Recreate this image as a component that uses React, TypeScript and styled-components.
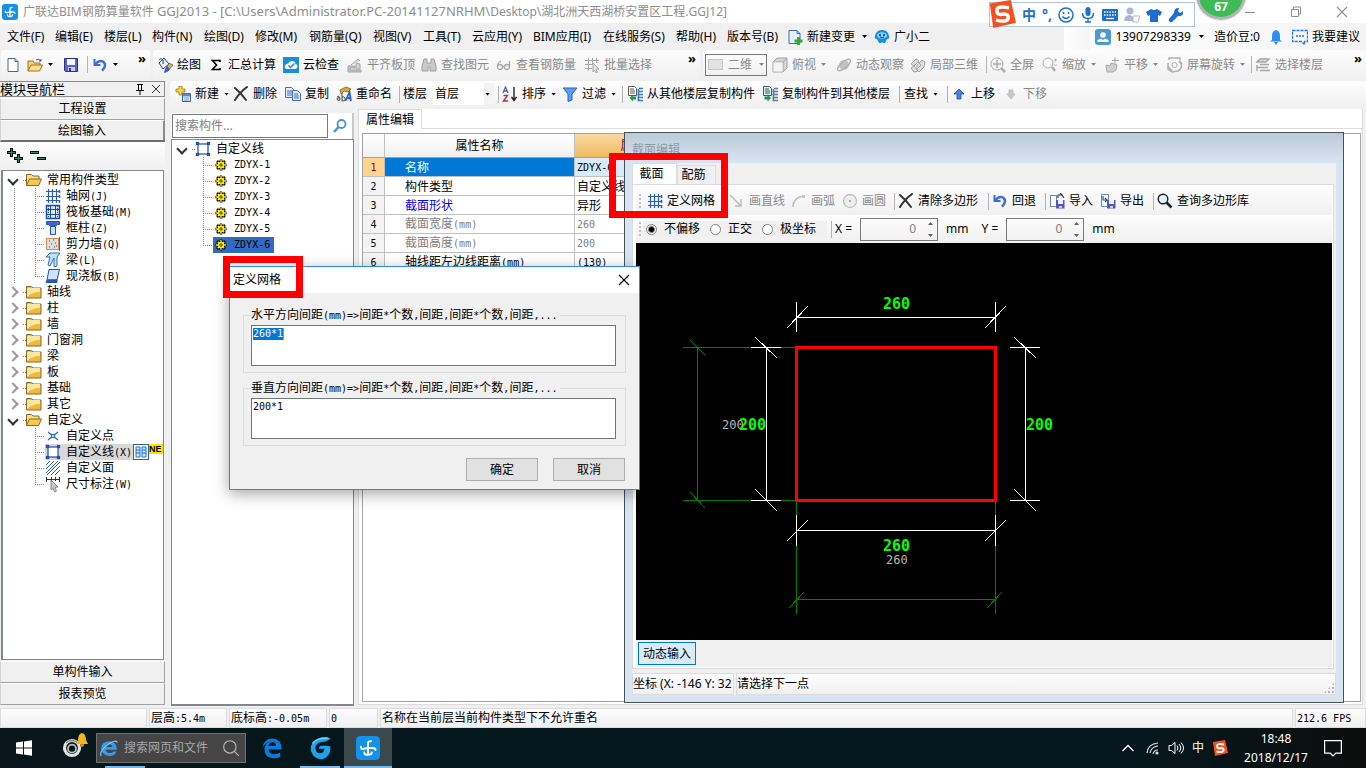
import React from "react";
import styled, { createGlobalStyle, css } from "styled-components";

const UI = `"Noto Sans", "Noto Sans CJK SC", sans-serif`;

const GlobalStyle = createGlobalStyle`
  * { box-sizing: border-box; }
  body { margin: 0; background: #f0f0f0; font: 12px/16px ${UI}; color: #000; overflow: hidden; }
  button, input, select, textarea { font: inherit; color: inherit; margin: 0; padding: 0; border: 0; background: none; border-radius: 0; outline: none; }
  ul { list-style: none; margin: 0; padding: 0; }
  svg { display: block; flex: none; }
`;

/* ---------- icons ---------- */

const glyphs: Record<string, React.ReactNode> = {
  app: (<><rect x="0" y="0" width="16" height="16" rx="3" fill="#1492ea" /><path d="M8 12.500V4.800q0-1.500 2-1.300M3.300 7.200q0 2 2.200 1.300L8 8h3q2 0 2 1.300M5.500 11q0 1.800 2.500 1.500 2.500 0 2.500-1.500" fill="none" stroke="#fff" strokeWidth="1.300" strokeLinecap="round" /></>),
  newFile: (<><path d="M3 1.500h7l3 3v10H3z" fill="#fff" stroke="#4a6496" /><path d="M10 1.500v3h3" fill="#cfdcf2" stroke="#4a6496" /></>),
  open: (<><path d="M1 14V4h5l1 2h6v2" fill="#f6d57c" stroke="#9c7420" /><path d="M1 14l3-6h11.500l-3 6z" fill="#fbe08c" stroke="#9c7420" /><path d="M9 3q3-2 5 1m0-2v2h-2" fill="none" stroke="#39569b" /></>),
  save: (<><path d="M1.500 1.500h13v13h-12l-1-1z" fill="#5b62c9" stroke="#28308c" /><path d="M4 2h8v6H4z" fill="#f5f7ff" /><path d="M5 10h7v4H5z" fill="#c9cdf0" /><path d="M6 11h2v3H6z" fill="#28308c" /></>),
  undo: (<><path d="M2.500 2v6h6" fill="none" stroke="#3e6fd0" strokeWidth="2" /><path d="M3 7.500q4-5 8-3 4 3 0 8l-1 1" fill="none" stroke="#3e6fd0" strokeWidth="2.500" /></>),
  paint: (<><path d="M2 6l5-5 5 6-6 5z" fill="#e9f0fb" stroke="#25448c" /><path d="M2 3q2-3 4 0v4" fill="none" stroke="#25448c" /><path d="M12 6l4 2-5 6-3 1 1-3z" fill="#e9b54a" stroke="#25448c" strokeWidth=".7" /><path d="M10 9l3 3-3 3-3 1 1-4z" fill="#3566c4" /></>),
  sigma: <path d="M12 5V3.500H4.500L8.500 8l-4 4.500H12V11" fill="none" stroke="#000" strokeWidth="1.600" />,
  cloud: (<><rect width="16" height="16" fill="#188fd8" /><path d="M4 12q-3-.5-2-3.500Q3 6.500 5 6.500 6 4 9 4q3 0 3.500 3 2.500.5 2 3-.5 2-2.500 2z" fill="#fff" /><path d="M5.500 8.500l2 2 4-4" fill="none" stroke="#188fd8" strokeWidth="1.500" /></>),
  align: (<><path d="M1 9h7v2H3v2h11v2H1z" fill="#c4c4c4" stroke="#a4a4a4" /><path d="M4 8l7-6 2 2M9 6l4 1v5H9z" fill="#d6d6d6" stroke="#a4a4a4" /></>),
  binocular: (<path d="M3 2h3v4h4V2h3l2 7v5H9v-4H7v4H1V9z" fill="#c9c9c9" stroke="#a0a0a0" />),
  glasses: (<g fill="none" stroke="#a8a8a8" strokeWidth="1.300"><circle cx="4" cy="10" r="2.500" /><circle cx="11" cy="10" r="2.500" /><path d="M1.500 9Q2 5 5 4M13.500 10V4M6.500 9.500h2" /></g>),
  batch: (<g fill="none" stroke="#a6a6a6"><path d="M1 3.500h14M1 7.500h8M1 11.500h7M4.500 1v13M8.500 1v6M12.500 1v5" /><path d="M9 6l6 6-3 .3 1.500 3-1.500.7-1.500-3L9 15z" fill="#e4e4e4" /></g>),
  flat: <rect x=".5" y="2.500" width="14" height="10" fill="#e2e2e2" stroke="#c4c4c4" />,
  cube: (<><path d="M1 5l4-4h10v10l-4 4H1z" fill="#d4d4d4" stroke="#a6a6a6" /><path d="M1 5h10v10M11 5l4-4" fill="#efefef" stroke="#a6a6a6" /><path d="M1.500 5.500h9v9h-9z" fill="#f4f4f4" /></>),
  orbit: (<><circle cx="8" cy="8" r="5" fill="#c2c2c2" /><ellipse cx="8" cy="8" rx="8" ry="3" transform="rotate(-40 8 8)" fill="none" stroke="#b0b0b0" strokeWidth="1.300" /></>),
  local3d: (<g fill="#dedede" stroke="#a4a4a4"><path d="M1 7l5-5 3 2-5 5zM7 8l5-5 3 2-1 5-5 5-2-2z" /><path d="M4 9l4 5-4 1-3-4z M8 5l3 3-4 4" /></g>),
  fullscreen: (<g fill="none" stroke="#adadad"><circle cx="7" cy="7" r="6" /><path d="M7 3v8M3 7h8" strokeWidth="1.500" /><path d="M11 11l4 4" strokeWidth="2.500" /></g>),
  zoomer: (<g fill="none" stroke="#adadad"><circle cx="6" cy="6" r="5" /><path d="M10 10l3 4" strokeWidth="2.500" /><path d="M12 3h3M13.500 1.500v3M12 8h3" /></g>),
  pan: (<g fill="#d0d0d0" stroke="#a8a8a8"><path d="M2 8l4 1 1-3 6 2-1 5-3 2H3z" /><path d="M11 0v7M8 3.500h7" fill="none" /></g>),
  rotate: (<g fill="none" stroke="#b0b0b0"><path d="M2 3V1h11v2M14 6q2 5-3 8l-6 1-4-3V6" strokeWidth="1.500" /><circle cx="7.500" cy="8" r="2.500" /><path d="M12 4l3 3M1 10l4 4" strokeWidth="2" /></g>),
  layers: (<path d="M2 5l3-3h9l-3 3zM5 7.500h9M2 10.500h11M5 13.500h10M2 8v6" fill="#dcdcdc" stroke="#a6a6a6" strokeWidth="1.400" />),
  change: (<><path d="M2 1.500h8l3 3v10H2z" fill="#e9f2ff" stroke="#3c6cb8" /><path d="M10 1.500v3h3" fill="none" stroke="#3c6cb8" /><path d="M10 8h3v2.500h2.500v3H13V16h-3v-2.500H7.500v-3H10z" fill="#2fae2f" /></>),
  mascot: (<><path d="M2 4l2-2q4-2 8 0l2 2 1 3q1 3-2 3l-2 4H9l-1-1-1 1H5l-2-4q-3 0-2-3z" fill="#1a8be0" /><ellipse cx="8" cy="6.500" rx="5" ry="3.300" fill="#7fd4ff" /><circle cx="6" cy="6" r="1" fill="#063c7a" /><circle cx="10" cy="6" r="1" fill="#063c7a" /><path d="M6 8q2 1.500 4 0" stroke="#063c7a" fill="none" /></>),
  user: (<><rect width="16" height="16" rx="3" fill="#4a9bd0" /><circle cx="8" cy="6" r="2.800" fill="#fff" /><path d="M2.500 13v-2l3.500-1.500 2 1.500 2-1.500 3.500 1.500v2z" fill="#fff" /></>),
  bell: (<path d="M8 1q4 1 4 6v4l2 1.500H2L4 11V7q0-5 4-6zM6 13h4l-2 3z" fill="#2e8ef0" />),
  chat: (<g fill="none" stroke="#2573d8"><path d="M.5 1.500h15v11h-3v3l-3-3h-9z" strokeDasharray="3 1" strokeWidth="1.300" /><path d="M4 7h2M7 7h2M10 7h2" strokeWidth="1.500" /></g>),
  create: (<><path d="M4 0h3v3h3v3H7v3H4V6H1V3h3z" fill="#f4d53c" stroke="#a08010" strokeWidth=".8" /><path d="M7.500 7.500h8v8h-8z" fill="#e4eefc" stroke="#3e62a8" /><path d="M8 8h7v2H8zM9 12h5M9 14h5" fill="#5d85cc" stroke="#5d85cc" strokeWidth=".8" /></>),
  cross: <path d="M2 2q6 5 11 12M14 1Q7 6 2 14" fill="none" stroke="#333" strokeWidth="2" strokeLinecap="round" />,
  copy: (<g fill="#e8f0fc" stroke="#3f6bb6"><path d="M.5 1.500h6l2 2v8h-8z" /><path d="M2 5h5M2 7h5M2 9h5" /><path d="M7.500 4.500h5l3 3v7h-8z" /><path d="M9 8h4M9 10h5M9 12h5" /></g>),
  rename: (<><path d="M4 4l6-3 5 2-3 3-4-1-3 3z" fill="#dba63a" stroke="#80601c" strokeWidth=".8" /><path d="M1 11q3-2 3 3-3 1-3-1t3-1M6 7v8q4 0 3-3-1-2-3-1" fill="none" stroke="#444" /><path d="M9.500 15L13.500 6l1.500 9M10.500 12h4" fill="none" stroke="#2f62c8" strokeWidth="1.800" /></>),
  sort: (<><path d="M1 7L3.500 1 6 7M2 5h3" fill="none" stroke="#4766b8" strokeWidth="1.300" /><path d="M1.500 9.500h4L1.500 15h4.500" fill="none" stroke="#a03c3c" strokeWidth="1.400" /><path d="M12 1v13M9.500 11l2.500 3.500 2.500-3.500" fill="none" stroke="#222" strokeWidth="1.400" /></>),
  filter: <path d="M1 2h14l-5 6v6l-4 1.500V8z" fill="#5c9cf0" stroke="#2c62c8" />,
  floorFrom: (<><path d="M1.500 .5h6l2 2v7h-8z" fill="#fff" stroke="#555" /><path d="M3 3h4M3 5h5M3 7h5" stroke="#555" /><path d="M6 8.500L2.500 12 6 15.500v-2h3v-3H6z" fill="#1f9a4c" /><path d="M12 2.500h4M10.500 5.500H16M10.500 8.500H16M10.500 11.500H16M10.500 14.500H16M11.500 3v12" stroke="#3a7cc4" strokeWidth="1.600" /></>),
  floorTo: (<><path d="M1.500 .5h6l2 2v7h-8z" fill="#d4f4f4" stroke="#456" /><path d="M3 3h4M3 5h5M3 7h5" stroke="#456" /><path d="M5.500 8.500L9 12l-3.500 3.500v-2h-3v-3h3z" fill="#1f9a4c" /><path d="M12 2.500h4M10.500 5.500H16M10.500 8.500H16M10.500 11.500H16M10.500 14.500H16M11.500 3v12" stroke="#5a7a98" strokeWidth="1.600" /></>),
  up: <path d="M8 3l5 5h-3v5H6V8H3z" fill="#4c7ee8" stroke="#2a4cae" strokeWidth=".8" />,
  down: <path d="M8 13l4-5h-2V4H6v4H4z" fill="#c8c8c8" stroke="#b4b4b4" strokeWidth=".8" />,
  folder: (<><path d="M.5 2.500h5l1.500 1.500h8v10H.5z" fill="#f0b93e" stroke="#866a2a" /><path d="M1 4h13v4q-8 0-13 5z" fill="#fbe7a4" /></>),
  folderOpen: (<><path d="M.5 13.500v-11h5L7 4h6v3" fill="#f7dc8c" stroke="#866a2a" /><path d="M.5 13.500l3-6.500h12l-3 6.500z" fill="#f8c84c" stroke="#866a2a" /></>),
  grid: (<g fill="none" stroke="#2c5cae"><path d="M1 3.500h13M1 8.500h13M1 12.500h13M3.500 1v14M7.500 1v14M11.500 1v14" strokeWidth="1.200" /><path d="M14.500 2v14" strokeDasharray="3 2" strokeWidth="1.500" /></g>),
  raft: (<g fill="none" stroke="#1c4c9c"><rect x="1.500" y="1.500" width="13" height="13" fill="#dbe8fa" strokeWidth="1.500" /><rect x="5.500" y="5.500" width="5" height="5" /><path d="M5.500 1v14M10.500 1v14M1 5.500h14M1 10.500h14" /><path d="M3.500 2v12M12.500 2v12" strokeDasharray="1 1" /></g>),
  column: (<><path d="M1.500 1.500h13v3h-2l-2 1.500H5.500l-2-1.500h-2z" fill="#3a6cd0" stroke="#2250b4" /><path d="M5.500 6.500h5v8h-5z" fill="#cfe0fa" stroke="#2250b4" /></>),
  wall: (<><rect x="1.500" y="2.500" width="12" height="11" fill="#dedede" stroke="#d08a60" /><path d="M4 5h1M8 4h1M6 8h1M10 7h1M4 11h1M9 11h1M11 10h1" stroke="#444" strokeWidth="1.200" /><path d="M14.500 1v14" stroke="#a85020" /></>),
  beam: (<path d="M1 5l4-4h10l-3 4v9l-3 1V6L5 14l-2-1 2-8z" fill="#bfe0fa" stroke="#2a70b8" />),
  slab: (<><path d="M4 1.500h10.500L12 12H2z" fill="#cfe2fb" stroke="#2250b4" /><path d="M2 12h10v2.500H1z" fill="#2a5cc0" stroke="#2250b4" /></>),
  point: (<g stroke="#2c6cc0" fill="#fff" strokeWidth="1.300"><path d="M3 4l10 8M13 4L3 12" /><rect x="6.500" y="6.500" width="3" height="3" /></g>),
  frame: (<g fill="#fff" stroke="#1c4cae" strokeWidth="1.200"><rect x="3" y="3" width="10" height="10" /><rect x="1.500" y="1.500" width="2" height="2" /><rect x="12.500" y="1.500" width="2" height="2" /><rect x="1.500" y="12.500" width="2" height="2" /><rect x="12.500" y="12.500" width="2" height="2" /></g>),
  hatch: <path d="M1 5l4-4M1 9l8-8M1 13l12-12M2 15L15 2M6 15l9-9M10 15l5-5" stroke="#2a5cb4" fill="none" />,
  dimension: (<><path d="M1 3.500h14M1.500 1v5M14.500 1v5M6.500 1v4M10.500 1v4" stroke="#333" fill="none" /><path d="M6 4l7 7-3 .5 1.500 3.500-2 .8-1.500-3.500L6 14z" fill="#c8c8c8" stroke="#8a8a8a" /></>),
  columns: (<><rect x=".5" y=".5" width="15" height="15" fill="#fff" stroke="#3060a8" /><path d="M3 3h4v10H3zM9 3h4v10H9z" fill="#cfe4ff" stroke="#1c70dc" /><path d="M3 6h4M3 9h4M9 6h4M9 9h4" stroke="#1c70dc" /></>),
  gear: (
    <g fill="none">
      <path d="M8 2.500v11M2.500 8h11M4 4l8 8M12 4l-8 8" stroke="#000" strokeWidth="2.600" />
      <circle cx="8" cy="8" r="3.800" stroke="#000" strokeWidth="1.500" />
      <path d="M8 3v10M3 8h10M4.700 4.700l6.600 6.600M11.300 4.700l-6.600 6.600" stroke="#ffee00" strokeWidth="1.300" />
      <circle cx="8" cy="8" r="2.600" stroke="#ffee00" strokeWidth="1.200" />
      <circle cx="8" cy="8" r="1.200" fill="#fff" stroke="#000" strokeWidth=".8" />
    </g>
  ),
  search: (<g fill="none" stroke="#4a90dc"><circle cx="9.500" cy="6" r="4" strokeWidth="1.800" /><path d="M6.500 9L2 14" strokeWidth="2.500" /></g>),
  line: <path d="M1 2l11 11M12 6v7H6" fill="none" stroke="#bcbcbc" strokeWidth="1.500" />,
  arc: (<><path d="M2 14Q2 5 12 3" fill="none" stroke="#bcbcbc" strokeWidth="1.500" /><rect x="11" y="2" width="3" height="3" fill="#c8c8c8" /></>),
  circle: (<><circle cx="8" cy="8" r="6.500" fill="#eee" stroke="#c0c0c0" strokeWidth="1.300" /><rect x="7" y="7" width="2" height="2" fill="#aaa" /></>),
  importer: (<><path d="M1.500 2.500h6v11h-6z" fill="#fff" stroke="#6c86b4" /><path d="M7 7h8.500v8.500H7z" fill="#5458b8" /><path d="M9 7h5v4H9z" fill="#eef" /><path d="M10 13h3v2h-3z" fill="#ccd" /><path d="M9 5V2h4l-2-2M13 2l2 3" fill="none" stroke="#335" strokeWidth="1.200" /></>),
  exporter: (<><path d="M1.500 1.500h7v12h-7z" fill="#fff" stroke="#6c86b4" /><path d="M3 3v4h4L5 5M7 7L5 9" fill="none" stroke="#2750a8" strokeWidth="1.200" /><path d="M7 7h8.500v8.500H7z" fill="#5458b8" /><path d="M9 7h5v4H9z" fill="#eef" /><path d="M10 13h3v2h-3z" fill="#ccd" /></>),
  query: (<><circle cx="6" cy="6" r="4.800" fill="#dff4fa" stroke="#222" strokeWidth="1.400" /><path d="M9.500 9.500l5 5" stroke="#222" strokeWidth="2.600" /></>),
  sogou: (<><path d="M1 2l12-2 3 13-13 3z" fill="#f4511e" /><path d="M12 4.500Q5 3 5 6t4 2q3 0 2.500 2.500Q11 13 4.500 11.500" fill="none" stroke="#fff" strokeWidth="2" /></>),
  edge: (<path d="M1 8Q2 1 8.500 1 15 1.500 15 9H5.500q.5 3.500 4 3.500 2.500 0 4.500-1.200v3q-2 1.200-5 1.200-6.500-.3-6.500-7Q3 4.500 6 3.500 2.500 4.500 1 8zM5.500 6.500H11Q11 3.800 8.300 3.800T5.500 6.500z" fill="#0a7bdc" fillRule="evenodd" />),
  ie: (<><path d="M1 8.500Q1.500 2 8.500 2 15 2.500 15 9.500H5q.8 3 3.700 3 2.300 0 3.300-1.500h2.700Q13 15 8.500 15 1.500 14.500 1 8.500zM5 7.200h6Q10.500 4.700 8 4.700T5 7.200z" fill="#2f9df4" fillRule="evenodd" /><path d="M1 15Q-1 11 7 5q7-5 8.500-2" fill="none" stroke="#8ccfff" /></>),
  glodon: (<><path d="M15 1.500Q11-.5 6 2 1 5 2 10q2 5.500 7 5.500 6-1 6-8.500l-3-.5H8.500Q7 7 7 8.500h4q-.5 3-3 3-3 0-3-3.500T9 4q4 0 6-2.500z" fill="#1da3ee" /><path d="M3 5Q6 1 13 1.500" fill="none" stroke="#6cd4fc" /></>),
  windows: <path d="M0 2.500l7-1v6H0zM8 1.400L16 .3v7.200H8zM0 8.500h7v6l-7-1zM8 8.500h8v7.200l-8-1.100z" fill="#fff" />,
  lens: (<g fill="none" stroke="#b8b8b8"><circle cx="7" cy="7" r="5.500" /><path d="M11 11l4 4" /></g>),
  face: (<g fill="none" stroke="#1c6fd0" strokeWidth="1.500"><circle cx="8" cy="8" r="7" /><path d="M4.500 9.500q3.500 4 7 0M5.500 5v2M10.500 5v2" /></g>),
  mic: (<><rect x="5.500" y="0" width="5" height="9" rx="2.500" fill="#1c6fd0" /><path d="M2.500 6q0 5.500 5.500 5.500T13.500 6M8 11v4M5 15h6" fill="none" stroke="#1c6fd0" strokeWidth="1.500" /></>),
  keyboard: (<><rect x="0" y="2" width="16" height="12" rx="1" fill="#1c6fd0" /><path d="M2 5h12M2 8h12" stroke="#fff" strokeWidth="1.300" strokeDasharray="1.500 1.200" /><path d="M4 11.500h8" stroke="#fff" strokeWidth="1.300" /></>),
  reader: (<g fill="#aab8d4"><circle cx="6" cy="4" r="3.500" /><path d="M0 13q1-5 6-5l3 2v4H1z" /><path d="M9 9h7l-2 6H9z" fill="#fff" stroke="#aab8d4" /></g>),
  shirt: <path d="M5 2q3 2 6 0l5 3-2 4-2-1v7H4V8L2 9 0 5z" fill="#1c6fd0" />,
  wrench: <path d="M15 4l-3 2-2-2 1-3q-5-.5-5 5L1 12q-1 2 1 3t3-1l5-5q6 1 5-5z" fill="#1c6fd0" />,
  plus2: (<g><path d="M4.500 0v9M0 4.500h9M11.500 6v9M7 10.500h9" stroke="#000" strokeWidth="3" /><path d="M4.500 1v7M1 4.500h7M11.500 7v7M8 10.500h7" stroke="#1f8a7c" strokeWidth="1" /></g>),
  minus2: (<g><path d="M0 4.500h9M7 10.500h9" stroke="#000" strokeWidth="3" /><path d="M1 4.500h7M8 10.500h7" stroke="#1f8a7c" strokeWidth="1" /></g>),
  wifi: (<g fill="none" stroke="#d8d8d8" strokeWidth="1.200"><path d="M3 13Q4 4 14 3M6 13q1-6 8-7M9 14q1-4 5-4" /><circle cx="13" cy="13" r="1" fill="#fff" /></g>),
  volume: (<g fill="none" stroke="#fff"><path d="M1 5.500h2.500l3.500-3v11l-3.500-3H1z" /><path d="M9 5.500q2 2.500 0 5M11 4q3.500 4 0 8M13 2.500q5 5.500 0 11" /></g>),
  chevronUp: <path d="M2.500 11L8 5.500l5.500 5.500" fill="none" stroke="#fff" strokeWidth="1.300" />,
  notice: <path d="M.5 1.500h15v11h-5L8 15l-2.500-2.500h-5z" fill="none" stroke="#fff" strokeWidth="1.200" />,
  swirl: (<g fill="none"><circle cx="8" cy="8" r="6" stroke="#e4e4e4" strokeWidth="2.500" /><circle cx="8" cy="8.500" r="3.200" stroke="#bbb" strokeWidth="1.500" /><path d="M3 4Q8 0 13 4" stroke="#888" /></g>),
  goldBell: (<><path d="M8 1q4 1 4 7l2 4H2l2-4q0-6 4-7z" fill="#f0b41c" /><path d="M6 12h4q0 3-2 3t-2-3z" fill="#c88a10" /></>),
  close: <path d="M3 3l10 10M13 3L3 13" stroke="currentColor" fill="none" strokeWidth="1.200" />,
  closeSmall: <path d="M4 4l8 8M12 4l-8 8" stroke="#333" fill="none" />,
  restore: <path d="M3.500 5.500h7v7h-7zM5.500 5v-2h7v7h-2" fill="none" stroke="currentColor" />,
  minimize: <path d="M3 8.500h10" stroke="currentColor" />,
  pin: <path d="M5 3.500h6M6.500 4v5M9.500 4v5M4 9.500h8M8 10v4" stroke="#000" fill="none" strokeWidth="1" />,
};

const Icon = ({ name, size = 16 }: { name: string; size?: number }) => (
  <svg width={size} height={size} viewBox="0 0 16 16" aria-hidden="true">{glyphs[name]}</svg>
);

const Caret = styled.i`
  flex: none;
  width: 5px;
  height: 3px;
  background: currentColor;
  clip-path: polygon(0 0, 100% 0, 50% 100%);
`;

/* Bitmap-style text: Latin runs take half the advance of a Chinese character. */
const Half = styled.span`
  font-family: "DejaVu Sans Mono", monospace;
  font-size: 10px;
  white-space: pre;
`;
const Sim = ({ children }: { children: string }) => (
  <>{children.split(/([\x20-\x7e]+)/).map((run, i) => (i % 2 ? <Half key={i}>{run}</Half> : run))}</>
);

/* ---------- shell ---------- */

const raised = "linear-gradient(#fdfdfd, #f0f0f0)";

const Shell = styled.div`
  position: relative;
  display: flex;
  flex-direction: column;
  height: 100vh;
  min-height: 700px;
  white-space: nowrap;
`;

const TitleBar = styled.header`
  display: flex;
  align-items: center;
  height: 23px;
  padding: 0 16px 0 2px;
  gap: 5px;
  background: #fff;
  color: #8e8e8e;
`;
const TitleText = styled.h1`
  flex: 1;
  margin: 0;
  font-size: 12px;
  font-weight: 400;
`;
const Path = styled.span`
  font-size: 13px;
`;
const WindowButtons = styled.div`
  display: flex;
  gap: 30px;
`;
const PlainButton = styled.button`
  display: flex;
  align-items: center;
`;

const ImeBar = styled.div`
  position: absolute;
  top: 2px;
  right: 171px;
  display: flex;
  align-items: center;
  gap: 6px;
  height: 25px;
  width: 206px;
  padding-left: 32px;
  background: #fff;
  border: 1px solid #b4c4d8;
  z-index: 3;
  color: #1c6fd0;
  font-weight: 700;
  font-size: 14px;
`;
const ImeLogo = styled.span`
  position: absolute;
  left: -2px;
  top: -3px;
`;
const SpeedBall = styled.div`
  position: absolute;
  top: -30px;
  right: 120px;
  width: 50px;
  height: 50px;
  padding-top: 26px;
  border: 3px solid #b4b4b4;
  outline: 1px solid #e4e4e4;
  border-radius: 25px;
  background: #3dbb55;
  color: #fff;
  font-weight: 700;
  text-align: center;
  z-index: 3;
`;

const MenuBar = styled.nav`
  display: flex;
  align-items: center;
  height: 27px;
  padding-left: 7px;
  background: #f0f0f0;
`;
const MenuItem = styled.button<{ $w: number }>`
  display: flex;
  align-items: center;
  gap: 4px;
  flex: 0 0 ${(p) => p.$w}px;
  text-align: left;
  ${Caret} { margin-left: 3px; }
`;
const Account = styled.div`
  display: flex;
  align-items: center;
  align-self: stretch;
  margin-left: auto;
  gap: 8px;
  padding: 0 6px 0 31px;
  background: linear-gradient(to right, #fff, #f4f4f4 25px, #fcfcfc 26px, #f4f4f4);
`;
const AccountItem = styled.button`
  display: flex;
  align-items: center;
  gap: 4px;
  ${Caret} { margin: 0 2px 0 4px; }
`;

const ToolRow = styled.div`
  display: flex;
  gap: 3px;
  height: 31px;
  padding-left: 1px;
`;
const Strip = styled.div<{ $w?: number }>`
  display: flex;
  align-items: center;
  flex: ${(p) => (p.$w ? `0 0 ${p.$w}px` : "1 1 0")};
  height: 29px;
  min-width: 0;
  padding: 0 4px;
  background: ${raised};
  border-radius: 3px;
`;
const ContentTools = styled(Strip)`
  flex: 0 0 26px;
  padding-left: 5px;
`;
const EditorTools = styled(Strip)`
  flex: 0 0 28px;
  padding-left: 3px;
`;
const ToolButton = styled.button<{ $w: number; $framed?: boolean }>`
  display: flex;
  align-items: center;
  gap: 4px;
  flex: 0 0 ${(p) => p.$w}px;
  height: 22px;
  &:disabled { color: #8a8a8a; }
  ${Caret} { margin-left: 1px; }
  ${(p) => p.$framed && css`
    margin: 0 5px 0 -2px;
    padding-left: 2px;
    border: 1px solid #787878;
    ${Caret} { margin-left: 3px; }
  `}
`;
const Sep = styled.span<{ $w?: number }>`
  flex: 0 0 ${(p) => p.$w ?? 8}px;
  height: 17px;
  background: linear-gradient(#b4b4b4, #b4b4b4) center / 1px 100% no-repeat;
`;
const More = styled.button`
  align-self: flex-start;
  margin-left: auto;
  font-size: 13px;
  font-weight: 700;
`;

type ToolProps = { icon?: string; label?: string; w: number; caret?: boolean; off?: boolean; framed?: boolean };
const Tool = ({ icon, label, w, caret, off, framed }: ToolProps) => (
  <ToolButton $w={w} $framed={framed} disabled={off} aria-label={label ?? icon}>
    {icon && <Icon name={icon} />}
    {label}
    {caret && <Caret />}
  </ToolButton>
);

const FloorLabel = styled.label`
  flex: 0 0 30px;
`;
const FloorBox = styled.span`
  display: flex;
  align-items: center;
  flex: 0 0 61px;
  height: 22px;
  padding-right: 4px;
  background: linear-gradient(to right, #fff 51px, #f4f4f4 51px);
  select { flex: 1; min-width: 0; appearance: none; padding-left: 2px; }
`;

const Workspace = styled.main`
  display: flex;
  flex: 1;
  min-height: 0;
`;

/* ---------- module navigator ---------- */

const Navigator = styled.aside`
  display: flex;
  flex-direction: column;
  flex: 0 0 165px;
  margin-right: 5px;
  padding-bottom: 2px;
`;
const NavHeader = styled.div`
  display: flex;
  align-items: center;
  height: 16px;
  margin-bottom: 1px;
  border: 1px solid #8a8a8a;
  border-left: 0;
  font-size: 13px;
  span { flex: 1; }
`;
const NavButton = styled.button<{ $active?: boolean }>`
  height: 22px;
  border: 1px solid #a0a0a0;
  border-color: #fff #a0a0a0 #a0a0a0 #d4d4d4;
  background: #f0f0f0;
  ${(p) => p.$active && css`border-bottom: 2px solid #6e6e6e; border-right: 2px solid #8a8a8a;`}
`;
const NavTools = styled.div`
  display: flex;
  align-items: center;
  gap: 7px;
  height: 28px;
  padding-left: 7px;
  background: ${raised};
`;
const TreeBox = styled.div`
  flex: 1;
  min-height: 0;
  margin: 0 1px 1px 1px;
  padding-top: 1px;
  border: 1px solid #828790;
  border-width: 1px 1px 1px 2px;
  background: #fff;
  overflow: hidden;
`;
const GroupRow = styled.div`
  display: flex;
  align-items: center;
  gap: 5px;
  height: 16px;
  padding-left: 5px;
`;
const Toggle = styled.button<{ $open?: boolean }>`
  display: flex;
  align-items: center;
  justify-content: center;
  width: 10px;
  height: 10px;
  color: ${(p) => (p.$open ? "#333" : "#999")};
  &::before {
    content: "";
    width: 6px;
    height: 6px;
    border: solid currentColor;
    border-width: 0 2px 2px 0;
    transform: rotate(${(p) => (p.$open ? 45 : -45)}deg);
  }
`;
const Dots = styled.span`
  width: 3px;
  margin-right: -5px;
  border-top: 1px dotted #808080;
`;
const ChildList = styled.ul<{ $pad: number; $guide?: boolean }>`
  padding-left: ${(p) => p.$pad}px;
  ${(p) => p.$guide && css`background: repeating-linear-gradient(#888 0 1px, transparent 1px 2px) 11px 0 / 1px 100% no-repeat;`}
`;
const Leaf = styled.li`
  display: flex;
  height: 16px;
`;
const Branch = styled.span`
  flex: 0 0 10px;
  background: repeating-linear-gradient(to right, #888 0 1px, transparent 1px 2px) 0 8px / 100% 1px no-repeat;
  &::before {
    content: "";
    display: block;
    width: 1px;
    height: 16px;
    background: repeating-linear-gradient(#888 0 1px, transparent 1px 2px);
  }
  ${Leaf}:last-child > &::before { height: 8px; }
`;
const LeafButton = styled.button<{ $tone?: "gray" | "blue" }>`
  display: flex;
  align-items: center;
  gap: 5px;
  height: 16px;
  padding-right: ${(p) => (p.$tone === "blue" ? 4 : 1)}px;
  background: ${(p) => (p.$tone === "gray" ? "#d8d8d8" : p.$tone === "blue" ? "#316ac5" : "none")};
`;
const NewTag = styled.span`
  width: 14px;
  height: 10px;
  overflow: hidden;
  background: #ffe000;
  font: 700 9px/10px "Liberation Sans", sans-serif;
`;

const common = [
  ["grid", "轴网(J)"], ["raft", "筏板基础(M)"], ["column", "框柱(Z)"],
  ["wall", "剪力墙(Q)"], ["beam", "梁(L)"], ["slab", "现浇板(B)"],
];
const closedGroups = ["轴线", "柱", "墙", "门窗洞", "梁", "板", "基础", "其它"];
const custom = [
  ["point", "自定义点"], ["frame", "自定义线(X)"], ["hatch", "自定义面"], ["dimension", "尺寸标注(W)"],
];

const Group = ({ label, open }: { label: string; open?: boolean }) => (
  <GroupRow>
    <Toggle $open={open} aria-label={label} />
    <Dots />
    <Icon name={open ? "folderOpen" : "folder"} />
    <span>{label}</span>
  </GroupRow>
);

/* ---------- component list ---------- */

const Content = styled.section`
  display: flex;
  flex-direction: column;
  flex: 1;
  min-width: 0;
`;
const Panels = styled.div`
  display: flex;
  flex: 1;
  min-height: 0;
  gap: 4px;
`;
const ListPanel = styled.div`
  display: flex;
  flex-direction: column;
  flex: 0 0 184px;
  min-width: 0;
  padding: 6px 0 1px 1px;
`;
const SearchRow = styled.form`
  display: flex;
  height: 26px;
  padding: 1px 0 1px 1px;
  border-right: 2px solid #c8c8c8;
  background: #fff;
  input {
    flex: 1;
    width: 100px;
    min-width: 0;
    padding-left: 2px;
    border: 1px solid #7a7a7a;
    &::placeholder { color: #808080; opacity: 1; }
  }
  button { width: 24px; padding-left: 4px; }
`;
const ListBox = styled(TreeBox)`
  margin: 0;
  border: 1px solid #828790;
  border-bottom-width: 2px;
`;

/* ---------- property table ---------- */

const PropertyPanel = styled.div`
  display: flex;
  flex-direction: column;
  flex: 1;
  min-width: 0;
  margin: 2px 3px 2px 0;
  background: #fff;
  border: 1px solid #dcdcdc;
  border-top: 0;
`;
const TabStrip = styled.div`
  display: flex;
  height: 20px;
  &::after {
    content: "";
    flex: 1;
    border-bottom: 1px solid #dcdcdc;
  }
`;
const TabButton = styled.button`
  width: 63px;
  border: 1px solid #dcdcdc;
  border-width: 1px 1px 0 0;
`;
const TableBox = styled.div`
  flex: 1;
  min-height: 0;
  margin: 4px 1px 2px 3px;
  border: 1px solid #a0a4aa;
  overflow: hidden;
`;
const Grid = styled.table`
  border-collapse: separate;
  border-spacing: 0;
  table-layout: fixed;
  width: 340px;
  th, td {
    height: 19px;
    padding: 1px 0 0;
    border: 1px solid #c0c0c0;
    border-width: 0 1px 1px 0;
    font-weight: 400;
    line-height: 16px;
    overflow: hidden;
  }
  thead th { height: 24px; background: linear-gradient(#fff, #f0f0f0); border-bottom-color: #a0a0a0; }
  thead th:last-child { background: linear-gradient(#f9d9a0, #efbb60); color: #800040; }
  tbody th { background: #f4f4f4; }
`;
const Row = styled.tr<{ $kind?: string }>`
  td:nth-child(2) { padding-left: 20px; color: ${(p) => (p.$kind === "link" ? "#0000ff" : "inherit")}; }
  td:nth-child(3) { padding-left: 2px; }
  ${(p) => p.$kind === "off" && css`color: #808080; th { color: #000; }`}
  ${(p) => p.$kind === "active" && css`
    && th { background: #ffd58c; color: #800040; }
    td:nth-child(2) { background: #0078d7; color: #fff; }
    td:nth-child(3) { background: #d9ebf9; }
  `}
`;
const properties = [
  ["名称", "ZDYX-6", "active"], ["构件类型", "自定义线", ""], ["截面形状", "异形", "link"],
  ["截面宽度(mm)", "260", "off"], ["截面高度(mm)", "200", "off"], ["轴线距左边线距离(mm)", "(130)", ""],
];

/* ---------- section editor window ---------- */

const Editor = styled.section`
  position: absolute;
  left: 624px;
  right: 22px;
  top: 132px;
  bottom: 65px;
  display: flex;
  flex-direction: column;
  padding: 0 7px 7px;
  border: 1px solid #4a5058;
  background: linear-gradient(#bccad8, #d7e4f2 30px);
`;
const EditorTitle = styled.h2`
  height: 30px;
  margin: 0;
  padding-top: 9px;
  color: #8e99a4;
  font-size: 12px;
  font-weight: 400;
`;
const EditorBody = styled.div`
  display: flex;
  flex-direction: column;
  flex: 1;
  min-height: 0;
  background: #f0f0f0;
`;
const EditorTabs = styled.div`
  display: flex;
  align-items: flex-end;
  height: 21px;
`;
const EditorTab = styled.button<{ $on?: boolean }>`
  width: ${(p) => (p.$on ? 45 : 39)}px;
  height: ${(p) => (p.$on ? 21 : 19)}px;
  padding-right: 6px;
  background: ${(p) => (p.$on ? "#fff" : "#f0f0f0")};
  border: 1px solid #dcdcdc;
  border-bottom: 0;
`;
const EditorPage = styled.div`
  display: flex;
  flex-direction: column;
  flex: 1;
  min-height: 0;
  margin-right: 2px;
  padding: 2px 1px 1px 3px;
  background: #fff;
  border: 1px solid #dcdcdc;
`;
const Grip = styled.span`
  flex: 0 0 2px;
  height: 15px;
  margin-right: 6px;
  background: repeating-linear-gradient(#c0c0c0 0 2px, transparent 2px 4px);
`;
const Choices = styled.fieldset`
  display: flex;
  flex: 0 0 184px;
  gap: 10px;
  height: 16px;
  margin: 0 0 0 -4px;
  padding: 0 0 0 3px;
  border: 0;
  background: #f0f0f0;
  label { display: flex; align-items: center; gap: 7px; }
  input {
    appearance: none;
    width: 11px;
    height: 11px;
    border: 1px solid #808080;
    border-radius: 6px;
    background: #fff;
    &:checked { background: radial-gradient(#000 2px, #fff 4px); }
  }
`;
const Spin = styled.label`
  display: flex;
  align-items: center;
  gap: 8px;
  margin-right: 13px;
`;
const SpinBox = styled.span`
  display: flex;
  align-items: center;
  width: 78px;
  height: 23px;
  padding-right: 4px;
  border: 1px solid #7a7a7a;
  color: #808080;
  input { flex: 1; min-width: 0; padding-right: 12px; text-align: right; }
`;
const Canvas = styled.svg`
  flex: 1;
  width: 100%;
  min-height: 0;
  background: #000;
  font-family: "DejaVu Sans Mono", monospace;
`;
const EditorFoot = styled.div`
  height: 27px;
  padding: 2px;
  background: #f0f0f0;
`;
const DynamicInput = styled.button`
  width: 58px;
  height: 23px;
  border: 1px solid #0078d7;
  background: #dcebf8;
`;
const StatusBar = styled.footer<{ $h: number; $top?: number }>`
  display: flex;
  flex: 0 0 ${(p) => p.$h}px;
  gap: 2px;
  padding-top: ${(p) => p.$top ?? 1}px;
`;
const StatusCell = styled.span<{ $w?: number }>`
  flex: ${(p) => (p.$w ? `0 0 ${p.$w}px` : "1")};
  padding: 1px 0 0 1px;
  overflow: hidden;
  background: ${raised};
  border: 1px solid #dcdcdc;
`;
const SizeGrip = styled.span`
  align-self: flex-end;
  width: 12px;
  height: 12px;
  margin-left: auto;
  background: radial-gradient(#b8b8b8 1px, transparent 1px) 0 0 / 4px 4px;
  clip-path: polygon(100% 0, 100% 100%, 0 100%);
`;
const EditorStatus = styled(StatusCell)`
  display: flex;
  padding: 2px 0 0;
`;

/* ---------- grid definition dialog ---------- */

const Dialog = styled.form`
  position: absolute;
  left: 229px;
  top: 266px;
  width: 411px;
  padding-bottom: 8px;
  border: 1px solid #2f8ae0;
  background: #f0f0f0;
  box-shadow: 0 4px 14px rgba(0, 0, 0, 0.35);
  z-index: 2;
`;
const DialogTitle = styled.div`
  display: flex;
  align-items: center;
  justify-content: space-between;
  height: 26px;
  padding: 0 7px 0 3px;
  background: #fff;
`;
const Fields = styled.fieldset`
  height: 66px;
  margin: 14px 13px 0;
  padding: 0 9px 0 7px;
  border: 1px solid #dcdcdc;
  legend { height: 16px; padding: 0 3px 0 0; line-height: 16px; }
  textarea {
    display: block;
    width: 100%;
    height: 41px;
    margin-top: 2px;
    padding: 1px;
    border: 1px solid #6e7680;
    background: #fff;
    font: 10px/14px "DejaVu Sans Mono", monospace;
    resize: none;
  }
  & + & { margin-top: 7px; }
`;
const FieldBody = styled.div`
  position: relative;
`;
const Selected = styled.span`
  position: absolute;
  left: 2px;
  top: 3px;
  height: 12px;
  background: #0078d7;
  border-right: 1px solid #f08020;
  color: #fff;
  font: 10px/12px "DejaVu Sans Mono", monospace;
  pointer-events: none;
`;
const DialogButtons = styled.div`
  display: flex;
  justify-content: flex-end;
  gap: 15px;
  padding: 12px 14px 0 0;
  button { width: 72px; height: 23px; border: 1px solid #adadad; background: #e1e1e1; }
`;
const RedMark = styled.div<{ $x: number; $y: number; $w: number; $h: number }>`
  position: absolute;
  left: ${(p) => p.$x}px;
  top: ${(p) => p.$y}px;
  width: ${(p) => p.$w}px;
  height: ${(p) => p.$h}px;
  border: 7px solid #ff0000;
  pointer-events: none;
  z-index: 4;
`;

/* ---------- taskbar ---------- */

const Taskbar = styled.footer`
  display: flex;
  flex: 0 0 40px;
  background: linear-gradient(to right, #07161b, #03181d 60%, #06171c 85%, #0d0d0d);
  color: #fff;
`;
const TaskButton = styled.button<{ $active?: boolean; $run?: boolean }>`
  position: relative;
  display: flex;
  align-items: center;
  justify-content: center;
  flex: 0 0 48px;
  background: ${(p) => (p.$active ? "#3b494d" : "none")};
  ${(p) => p.$run && css`
    &::after {
      content: "";
      position: absolute;
      left: ${p.$active ? 0 : 4}px;
      right: ${p.$active ? 0 : 4}px;
      bottom: 0;
      height: 2px;
      background: #76b9ed;
    }
  `}
`;
const BellBadge = styled.span`
  position: absolute;
  left: 26px;
  top: 4px;
`;
const TaskSearch = styled.label`
  position: relative;
  display: flex;
  align-items: center;
  gap: 6px;
  width: 150px;
  height: 30px;
  margin: 5px 2px 0 0;
  padding: 0 5px 0 3px;
  border: 1px solid #707070;
  background: #454545;
  input { flex: 1; min-width: 0; }
  input::placeholder { color: #a8a8a8; opacity: 1; }
  &::after {
    content: "";
    position: absolute;
    left: 8px;
    bottom: -6px;
    width: 40px;
    height: 2px;
    background: #76b9ed;
  }
`;
const Tray = styled.div`
  display: flex;
  align-items: center;
  gap: 8px;
  margin-left: auto;
  padding-right: 24px;
`;
const Clock = styled.time`
  width: 72px;
  margin: 0 4px;
  text-align: center;
  line-height: 19px;
`;

const menus: [string, number][] = [
  ["文件(F)", 48], ["编辑(E)", 49], ["楼层(L)", 48], ["构件(N)", 52], ["绘图(D)", 51], ["修改(M)", 54],
  ["钢筋量(Q)", 64], ["视图(V)", 50], ["工具(T)", 49], ["云应用(Y)", 61], ["BIM应用(I)", 70],
  ["在线服务(S)", 73], ["帮助(H)", 51], ["版本号(B)", 60],
];

const Drawing = () => (
  <Canvas aria-label="截面">
    <g stroke="#008000" fill="none" shapeRendering="crispEdges">
      <path d="M47 104.500H160M47 257.500H160M61.500 104V258M54 97L69 112M54 249L69 265" />
      <path d="M160.500 258V371M359.500 258V371M160 356.500H360M153 365L168 349M351 365L366 349" />
    </g>
    <g stroke="#fff" fill="none" shapeRendering="crispEdges">
      <path d="M160 74.500H360M160.500 59V89M359.500 59V89M151 85L172 63M349 85L370 63" />
      <path d="M160 287.500H360M160.500 272V303M359.500 272V303M151 298L172 277M349 298L370 277" />
      <path d="M130.500 104V258M115 104.500H145M115 257.500H145M119 94L141 115M119 246L141 268" />
      <path d="M389.500 104V258M374 104.500H404M374 257.500H404M378 94L400 115M378 246L400 268" />
    </g>
    <rect x="160.500" y="104.500" width="199" height="153" fill="none" stroke="#ff0000" strokeWidth="3" />
    <g fill="#b8b8b8" fontSize="12">
      <text x="86" y="186">200</text>
      <text x="250" y="321">260</text>
    </g>
    <g fill="#00ff00" fontSize="15" fontWeight="700">
      <text x="247" y="66">260</text>
      <text x="247" y="308">260</text>
      <text x="103" y="187">200</text>
      <text x="390" y="187">200</text>
    </g>
  </Canvas>
);

const Spinner = ({ axis }: { axis: string }) => (
  <Spin>
    {axis} =
    <SpinBox>
      <input defaultValue="0" aria-label={axis} />
      <svg width="5" height="15"><path d="M0 3L2.500 0 5 3zM0 12h5L2.500 15z" fill="#606060" /></svg>
    </SpinBox>
    mm
  </Spin>
);

export default function App() {
  return (
    <Shell>
      <GlobalStyle />
      <TitleBar>
        <Icon name="app" />
        <TitleText>
          广联达BIM钢筋算量软件 <Path>GGJ2013 - [C:\Users\Administrator.PC-20141127NRHM\</Path>Desktop\湖北洲天西湖桥安置区工程.GGJ12]
        </TitleText>
        <WindowButtons>
          {["minimize", "restore", "close"].map((n) => (
            <PlainButton key={n} aria-label={n}><Icon name={n} /></PlainButton>
          ))}
        </WindowButtons>
      </TitleBar>
      <ImeBar>
        <ImeLogo><Icon name="sogou" size={28} /></ImeLogo>
        <span>中</span>
        <span>°,</span>
        {["face", "mic", "keyboard", "reader", "shirt", "wrench"].map((n) => <Icon key={n} name={n} />)}
      </ImeBar>
      <SpeedBall>67</SpeedBall>

      <MenuBar>
        {menus.map(([label, w]) => <MenuItem key={label} $w={w}>{label}</MenuItem>)}
        <MenuItem $w={87}><Icon name="change" />新建变更<Caret /></MenuItem>
        <MenuItem $w={60}><Icon name="mascot" />广小二</MenuItem>
        <Account>
          <AccountItem><Icon name="user" />13907298339<Caret /></AccountItem>
          <AccountItem>造价豆:0</AccountItem>
          <AccountItem aria-label="通知"><Icon name="bell" /></AccountItem>
          <AccountItem><Icon name="chat" />我要建议</AccountItem>
        </Account>
      </MenuBar>

      <ToolRow>
        <Strip $w={149}>
          <Tool icon="newFile" w={22} />
          <Tool icon="open" w={36} caret />
          <Tool icon="save" w={20} />
          <Sep $w={9} />
          <Tool icon="undo" w={36} caret />
          <More aria-label="更多">»</More>
        </Strip>
        <Strip $w={547}>
          <Tool icon="paint" label="绘图" w={51} />
          <Tool icon="sigma" label="汇总计算" w={75} />
          <Tool icon="cloud" label="云检查" w={64} />
          <Tool icon="align" label="平齐板顶" w={74} off />
          <Tool icon="binocular" label="查找图元" w={75} off />
          <Tool icon="glasses" label="查看钢筋量" w={88} off />
          <Tool icon="batch" label="批量选择" w={76} off />
          <More aria-label="更多">»</More>
        </Strip>
        <Strip>
          <Tool icon="flat" label="二维" w={62} caret off framed />
          <Tool icon="cube" label="俯视" w={64} caret off />
          <Tool icon="orbit" label="动态观察" w={74} off />
          <Tool icon="local3d" label="局部三维" w={72} off />
          <Sep />
          <Tool icon="fullscreen" label="全屏" w={52} off />
          <Tool icon="zoomer" label="缩放" w={62} caret off />
          <Tool icon="pan" label="平移" w={63} caret off />
          <Tool icon="rotate" label="屏幕旋转" w={80} caret off />
          <Sep />
          <Tool icon="layers" label="选择楼层" w={72} off />
          <More aria-label="更多">»</More>
        </Strip>
      </ToolRow>

      <Workspace>
        <Navigator>
          <NavHeader>
            <span>模块导航栏</span>
            <PlainButton aria-label="固定"><Icon name="pin" /></PlainButton>
            <PlainButton aria-label="关闭"><Icon name="closeSmall" /></PlainButton>
          </NavHeader>
          <NavButton>工程设置</NavButton>
          <NavButton $active>绘图输入</NavButton>
          <NavTools>
            <PlainButton aria-label="全部展开"><Icon name="plus2" /></PlainButton>
            <PlainButton aria-label="全部折叠"><Icon name="minus2" /></PlainButton>
          </NavTools>
          <TreeBox>
            <Group label="常用构件类型" open />
            <ChildList $pad={32} $guide>
              {common.map(([icon, label]) => (
                <Leaf key={label}><Branch /><LeafButton><Icon name={icon} /><span><Sim>{label}</Sim></span></LeafButton></Leaf>
              ))}
            </ChildList>
            {closedGroups.map((g) => <Group key={g} label={g} />)}
            <Group label="自定义" open />
            <ChildList $pad={32}>
              {custom.map(([icon, label]) => (
                <Leaf key={label}>
                  <Branch />
                  <LeafButton $tone={icon === "frame" ? "gray" : undefined}><Icon name={icon} /><span><Sim>{label}</Sim></span></LeafButton>
                  {icon === "frame" && <><Icon name="columns" /><NewTag>NE</NewTag></>}
                </Leaf>
              ))}
            </ChildList>
          </TreeBox>
          <NavButton>单构件输入</NavButton>
          <NavButton>报表预览</NavButton>
        </Navigator>

        <Content>
          <ContentTools>
            <Tool icon="create" label="新建" w={58} caret />
            <Tool icon="cross" label="删除" w={52} />
            <Tool icon="copy" label="复制" w={51} />
            <Tool icon="rename" label="重命名" w={59} />
            <Sep />
            <FloorLabel htmlFor="floor">楼层</FloorLabel>
            <FloorBox>
              <select id="floor" defaultValue="首层"><option>首层</option></select>
              <Caret />
            </FloorBox>
            <Sep />
            <Tool icon="sort" label="排序" w={60} caret />
            <Tool icon="filter" label="过滤" w={56} caret />
            <Sep $w={9} />
            <Tool icon="floorFrom" label="从其他楼层复制构件" w={135} />
            <Tool icon="floorTo" label="复制构件到其他楼层" w={132} />
            <Sep $w={10} />
            <Tool label="查找" w={39} caret />
            <Sep />
            <Tool icon="up" label="上移" w={52} />
            <Tool icon="down" label="下移" w={52} off />
          </ContentTools>
          <Panels>
            <ListPanel>
              <SearchRow onSubmit={(e) => e.preventDefault()}>
                <input placeholder="搜索构件..." aria-label="搜索构件" />
                <button aria-label="搜索"><Icon name="search" /></button>
              </SearchRow>
              <ListBox>
                <GroupRow>
                  <Toggle $open aria-label="自定义线" />
                  <Dots />
                  <Icon name="frame" />
                  <span>自定义线</span>
                </GroupRow>
                <ChildList $pad={31}>
                  {[1, 2, 3, 4, 5, 6].map((n) => (
                    <Leaf key={n}>
                      <Branch />
                      <LeafButton $tone={n === 6 ? "blue" : undefined}><Icon name="gear" /><Half>{`ZDYX-${n}`}</Half></LeafButton>
                    </Leaf>
                  ))}
                </ChildList>
              </ListBox>
            </ListPanel>
            <PropertyPanel>
              <TabStrip><TabButton>属性编辑</TabButton></TabStrip>
              <TableBox>
                <Grid>
                  <colgroup><col width="22" /><col width="190" /><col width="128" /></colgroup>
                  <thead><tr><th /><th>属性名称</th><th>属性值</th></tr></thead>
                  <tbody>
                    {properties.map(([name, value, kind], i) => (
                      <Row key={name} $kind={kind}>
                        <th><Half>{String(i + 1)}</Half></th>
                        <td><Sim>{name}</Sim></td>
                        <td><Sim>{value}</Sim></td>
                      </Row>
                    ))}
                  </tbody>
                </Grid>
              </TableBox>
            </PropertyPanel>
          </Panels>
        </Content>
      </Workspace>

      <StatusBar $h={21}>
        <StatusCell $w={147} />
        <StatusCell $w={78}><Sim>层高:5.4m</Sim></StatusCell>
        <StatusCell $w={98}><Sim>底标高:-0.05m</Sim></StatusCell>
        <StatusCell $w={49}><Sim>0</Sim></StatusCell>
        <StatusCell>名称在当前层当前构件类型下不允许重名</StatusCell>
        <StatusCell $w={71}><Sim>212.6 FPS</Sim></StatusCell>
      </StatusBar>

      <Taskbar>
        <TaskButton aria-label="开始"><Icon name="windows" /></TaskButton>
        <TaskButton aria-label="助手"><Icon name="swirl" size={20} /><BellBadge><Icon name="goldBell" /></BellBadge></TaskButton>
        <TaskSearch>
          <Icon name="ie" size={18} />
          <input placeholder="搜索网页和文件" aria-label="搜索网页和文件" />
          <Icon name="lens" size={18} />
        </TaskSearch>
        <TaskButton aria-label="Edge"><Icon name="edge" size={22} /></TaskButton>
        <TaskButton aria-label="广联达" $run><Icon name="glodon" size={24} /></TaskButton>
        <TaskButton aria-label="GGJ2013" $run $active><Icon name="app" size={24} /></TaskButton>
        <Tray>
          <Icon name="chevronUp" />
          <Icon name="wifi" />
          <Icon name="volume" />
          <span>中</span>
          <Icon name="sogou" />
          <Clock>18:48<br />2018/12/17</Clock>
          <Icon name="notice" size={18} />
        </Tray>
      </Taskbar>

      <Editor>
        <EditorTitle>截面编辑</EditorTitle>
        <EditorBody>
          <EditorTabs>
            <EditorTab $on>截面</EditorTab>
            <EditorTab>配筋</EditorTab>
          </EditorTabs>
          <EditorPage>
            <EditorTools>
              <Grip />
              <Tool icon="grid" label="定义网格" w={82} />
              <Tool icon="line" label="画直线" w={62} off />
              <Tool icon="arc" label="画弧" w={51} off />
              <Tool icon="circle" label="画圆" w={48} off />
              <Sep />
              <Tool icon="cross" label="清除多边形" w={86} />
              <Sep />
              <Tool icon="undo" label="回退" w={49} />
              <Sep />
              <Tool icon="importer" label="导入" w={51} />
              <Tool icon="exporter" label="导出" w={49} />
              <Sep />
              <Tool icon="query" label="查询多边形库" w={96} />
            </EditorTools>
            <EditorTools>
              <Grip />
              <Choices aria-label="偏移方式">
                <label><input type="radio" name="offset" defaultChecked />不偏移</label>
                <label><input type="radio" name="offset" />正交</label>
                <label><input type="radio" name="offset" />极坐标</label>
              </Choices>
              <Sep />
              <Spinner axis="X" />
              <Spinner axis="Y" />
            </EditorTools>
            <Drawing />
            <EditorFoot><DynamicInput>动态输入</DynamicInput></EditorFoot>
          </EditorPage>
          <StatusBar $h={26} $top={4}>
            <EditorStatus $w={102}>坐标 (X: -146 Y: 32</EditorStatus>
            <EditorStatus>请选择下一点<SizeGrip /></EditorStatus>
          </StatusBar>
        </EditorBody>
      </Editor>

      <Dialog onSubmit={(e) => e.preventDefault()}>
        <DialogTitle>
          定义网格
          <PlainButton type="button" aria-label="关闭"><Icon name="close" /></PlainButton>
        </DialogTitle>
        <Fields>
          <legend><Sim>水平方向间距(mm)=&gt;间距*个数,间距,间距*个数,间距,...</Sim></legend>
          <FieldBody>
            <textarea aria-label="水平方向间距" />
            <Selected>260*1</Selected>
          </FieldBody>
        </Fields>
        <Fields>
          <legend><Sim>垂直方向间距(mm)=&gt;间距*个数,间距,间距*个数,间距,...</Sim></legend>
          <FieldBody>
            <textarea aria-label="垂直方向间距" defaultValue="200*1" />
          </FieldBody>
        </Fields>
        <DialogButtons>
          <button>确定</button>
          <button type="button">取消</button>
        </DialogButtons>
      </Dialog>

      <RedMark $x={223} $y={256} $w={80} $h={42} />
      <RedMark $x={609} $y={153} $w={119} $h={65} />
    </Shell>
  );
}
